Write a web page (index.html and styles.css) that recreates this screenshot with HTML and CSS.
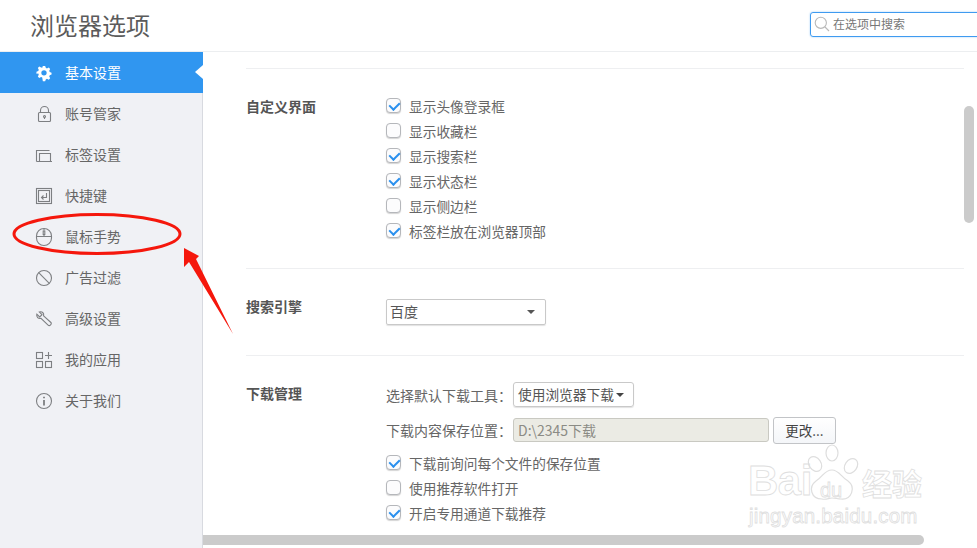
FILE: index.html
```html
<!DOCTYPE html>
<html lang="zh">
<head>
<meta charset="utf-8">
<title>浏览器选项</title>
<link rel="stylesheet" href="styles.css">
</head>
<body>
<div class="app">
  <header class="top">
    <h1 class="title">浏览器选项</h1>
    <div class="search">
      <svg class="search-icon" width="16" height="16" viewBox="0 0 16 16"><circle cx="6.800" cy="6.800" r="5.600"/><path d="M11 11l4 4"/></svg>
      <span>在选项中搜索</span>
    </div>
  </header>
  <div class="body">
    <nav class="side">
      <a class="item active">
        <svg class="ico" viewBox="0 0 18 18"><path class="solid" fill-rule="evenodd" d="M7.700 1h2.600l.7 2.200 1.300.6 2.100-1 1.500 1.600-1 2 .5 1.400 2.100.8v2.200l-2.100.8-.5 1.400 1 2-1.500 1.600-2.100-1-1.300.6-.7 2.200H7.700L7 14.200l-1.300-.6-2.100 1-1.500-1.600 1-2-.5-1.400L.5 9.800V7.600l2.100-.8.5-1.400-1-2 1.500-1.600 2.100 1L7 3.200zM9 5.800a3 3 0 1 0 0 6 3 3 0 0 0 0-6z"/></svg>
        <span>基本设置</span>
      </a>
      <a class="item">
        <svg class="ico" viewBox="0 0 16 16"><rect x="2.500" y="6.500" width="12" height="9" rx="1"/><path d="M4.500 6.500V4.500a4 4 0 0 1 8 0v2"/><circle cx="8.500" cy="10.500" r="1"/><path d="M8.500 11.500v1.500"/></svg>
        <span>账号管家</span>
      </a>
      <a class="item">
        <svg class="ico" viewBox="0 0 16 16"><path d="M.5 14.500V3.500H13.500M3.500 14.500V6.500H14.500V14.500M.5 14.500H16"/></svg>
        <span>标签设置</span>
      </a>
      <a class="item">
        <svg class="ico" viewBox="0 0 16 16"><rect x=".5" y=".5" width="15" height="15"/><rect x="2.500" y="2.500" width="11" height="11"/><path d="M10.500 5v4.500H5.500M7.500 7.500l-2 2 2 2"/></svg>
        <span>快捷键</span>
      </a>
      <a class="item">
        <svg class="ico" viewBox="0 0 16 16"><rect x=".5" y="-.5" width="15" height="17" rx="7.500"/><path d="M.5 7.500h15M8 -.5v2M8 5.500v2"/><rect x="7.200" y="2" width="1.600" height="3.500"/></svg>
        <span>鼠标手势</span>
      </a>
      <a class="item">
        <svg class="ico" viewBox="0 0 16 16"><circle cx="8" cy="8" r="7.500"/><path d="M2.700 2.700l10.600 10.600"/></svg>
        <span>广告过滤</span>
      </a>
      <a class="item">
        <svg class="ico" viewBox="0 0 16 16"><path d="M.8 3.200l2.900 2.700 2.300-2.200L3.300 1c2.700-.9 5 .9 4.300 3.800l7.300 6.700c1.400 1.400-1.300 4.100-2.800 2.700L5 7.400C2.200 8 .2 6 .8 3.200z"/></svg>
        <span>高级设置</span>
      </a>
      <a class="item">
        <svg class="ico" viewBox="0 0 16 16"><rect x=".5" y=".5" width="6" height="6"/><rect x=".5" y="9.500" width="6" height="6"/><rect x="9.500" y="9.500" width="6" height="6"/><path d="M12.500 0v7M9 3.500h7"/></svg>
        <span>我的应用</span>
      </a>
      <a class="item">
        <svg class="ico" viewBox="0 0 16 16"><circle cx="8" cy="8" r="7.500"/><path class="thick" d="M8 7v5.500M8 3.800v1.500"/></svg>
        <span>关于我们</span>
      </a>
    </nav>
    <main class="main">
      <section class="sec sec-ui">
        <h2 class="sec-name">自定义界面</h2>
        <div class="sec-body">
          <label class="check"><i class="box on"></i><span>显示头像登录框</span></label>
          <label class="check"><i class="box"></i><span>显示收藏栏</span></label>
          <label class="check"><i class="box on"></i><span>显示搜索栏</span></label>
          <label class="check"><i class="box on"></i><span>显示状态栏</span></label>
          <label class="check"><i class="box"></i><span>显示侧边栏</span></label>
          <label class="check"><i class="box on"></i><span>标签栏放在浏览器顶部</span></label>
        </div>
      </section>
      <section class="sec sec-engine">
        <h2 class="sec-name">搜索引擎</h2>
        <div class="sec-body">
          <div class="engine"><span>百度</span><i class="caret"></i></div>
        </div>
      </section>
      <section class="sec sec-dl">
        <h2 class="sec-name">下载管理</h2>
        <div class="sec-body">
          <div class="dl-row dl-tool">
            <span class="dl-label">选择默认下载工具：</span>
            <div class="tool"><span>使用浏览器下载</span><i class="caret dark"></i></div>
          </div>
          <div class="dl-row dl-path">
            <span class="dl-label">下载内容保存位置：</span>
            <div class="path">D:\2345下载</div>
            <div class="btn">更改...</div>
          </div>
          <label class="check"><i class="box on"></i><span>下载前询问每个文件的保存位置</span></label>
          <label class="check"><i class="box"></i><span>使用推荐软件打开</span></label>
          <label class="check"><i class="box on"></i><span>开启专用通道下载推荐</span></label>
        </div>
      </section>
    </main>
  </div>
  <div class="vbar"></div>
  <div class="hbar"></div>

  <div class="mark">
    <svg class="paw" width="56" height="58" viewBox="0 0 56 58"><ellipse cx="27" cy="9" rx="6" ry="8"/><ellipse cx="10" cy="20" rx="6" ry="8" transform="rotate(-35 10 20)"/><ellipse cx="46" cy="22" rx="6" ry="8" transform="rotate(35 46 22)"/><path d="M27 26c7 0 9 7 16 11 8 6 4 19-7 18-3 0-6-1-9-1s-6 2-10 1C6 55 3 43 11 37c7-4 8-11 16-11z"/></svg>
    <span class="mark-bai">Bai</span>
    <span class="mark-du">du</span>
    <span class="mark-cn">经验</span>
    <span class="mark-url">jingyan.baidu.com</span>
  </div>

  <svg class="ann" width="240" height="340" viewBox="0 0 240 340">
    <ellipse class="ring" cx="97" cy="234" rx="83" ry="19.500"/>
    <path class="arrow" d="M184 248l15 8-3 3 37 75-44-72-5 5z"/>
  </svg>
</div>
</body>
</html>
```
FILE: styles.css
```css
* { box-sizing: border-box; }
html, body { margin: 0; height: 100%; overflow: hidden; background: #fff; }
body { font-family: "Noto Sans CJK SC", "Liberation Sans", sans-serif; font-size: 14px; color: #555; }
.app { position: relative; width: 977px; height: 548px; display: flex; flex-direction: column; overflow: hidden; }

.top { height: 52px; flex: none; display: flex; align-items: center; justify-content: space-between; padding: 0 0 0 30px; border-bottom: 1px solid #eceef0; background: #fff; }
.title { margin: 0 0 2px; font-size: 24px; font-weight: 400; line-height: 32px; color: #5b5b5b; }
.search { width: 180px; height: 25px; margin: 0 -13px 3px 0; display: flex; align-items: center; gap: 3px; padding-left: 3px; border: 1px solid #3f9bf0; border-radius: 3px; box-shadow: 0 0 2px #9ccbf5; color: #777; font-size: 12px; }
.search span { margin-top: -2px; }
.search-icon { fill: none; stroke: #b9b9b9; stroke-width: 1.100; flex: none; }

.body { flex: 1; display: flex; min-height: 0; }
.side { width: 203px; flex: none; background: #f0f1f5; border-right: 1px solid #d8dae0; }
.item { position: relative; height: 41px; display: flex; align-items: center; gap: 13px; padding-left: 36px; color: #666; font-size: 14px; }
.item span { margin-top: -2px; }
.item.active { background: #3096f0; color: #fff; margin-right: -1px; }
.item.active::after { content: ""; position: absolute; right: 0; top: 13px; border: 7px solid transparent; border-left: 0; border-right: 8px solid #fff; }
.ico { width: 16px; height: 16px; flex: none; fill: none; stroke: #7d7f82; stroke-width: 1.100; overflow: visible; }
.ico .solid { fill: #fff; stroke: none; }
.ico .thick { stroke-width: 1.800; }

.main { flex: 1; min-width: 0; padding: 16px 13px 0 43px; overflow: hidden; }
.sec { display: flex; border-top: 1px solid #eeeff1; }
.sec-name { margin: 0; width: 140px; flex: none; font-size: 14px; line-height: 20px; font-weight: 700; color: #555; }
.sec-body { flex: 1; min-width: 0; }
.sec-ui { height: 200px; padding-top: 24px; }
.sec-ui .sec-name { margin-top: 3px; }
.sec-engine { height: 87px; padding-top: 27px; }
.sec-dl { padding-top: 27px; }

.check { display: flex; align-items: center; height: 25px; gap: 8px; font-size: 13.700px; color: #666; }
.box { width: 15px; height: 15px; flex: none; border: 1px solid #b5b7bb; border-radius: 4px; background: #fcfcfd; box-shadow: 0 1px 1px #d5d5d5; position: relative; }
.box.on::after { content: ""; position: absolute; left: 4px; top: 1px; width: 5px; height: 8px; border: solid #2b90ee; border-width: 0 2px 2px 0; transform: rotate(45deg); }

.engine { width: 160px; height: 26px; margin-top: 3px; display: flex; align-items: center; justify-content: space-between; padding: 0 10px 0 3px; border: 1px solid #c9c9c9; border-radius: 2px; box-shadow: 0 1px 1px #e2e2e2; font-size: 14px; color: #555; }
.engine span { margin-top: -2px; }
.caret { width: 0; height: 0; border: 4px solid transparent; border-top: 4px solid #555; border-bottom: 0; }
.caret.dark { border-top-color: #444; margin-left: 2px; }

.dl-row { display: flex; align-items: center; }
.dl-tool { height: 25px; margin-top: -1px; }
.dl-path { height: 26px; margin-top: 10px; margin-bottom: 7px; }
.dl-label { width: 127px; flex: none; font-size: 14px; color: #666; white-space: nowrap; }
.tool { width: 121px; height: 25px; display: flex; align-items: center; padding-left: 4px; border: 1px solid #c9c9c9; border-radius: 3px; box-shadow: 0 1px 1px #e2e2e2; font-size: 13.700px; color: #555; white-space: nowrap; }
.tool span { margin-top: -2px; }
.path { width: 256px; height: 24px; margin-right: 4px; padding-left: 4px; line-height: 22px; background: #ebebe4; border: 1px solid #c9c9c2; border-radius: 3px; font-size: 14px; color: #8b8b85; }
.btn { width: 63px; height: 27px; line-height: 24px; text-align: center; border: 1px solid #c2c4c7; border-radius: 3px; background: linear-gradient(#fff, #f4f6f9); font-size: 13.500px; color: #444; }

.vbar { position: absolute; left: 964px; top: 106px; width: 10px; height: 117px; border-radius: 5px; background: #cbcbcb; }
.hbar { position: absolute; left: 203px; top: 535px; width: 721px; height: 10px; border-radius: 0 5px 5px 0; background: #cbcbcb; }

.ann { position: absolute; left: 0; top: 0; pointer-events: none; }
.ring { fill: none; stroke: #f5170c; stroke-width: 3; }
.arrow { fill: #f5170c; }

.mark { position: absolute; left: 748px; top: 440px; width: 210px; height: 95px; color: transparent; -webkit-text-stroke: .8px #dedede; pointer-events: none; }
.mark span { position: absolute; white-space: nowrap; font-family: "Liberation Sans", "Noto Sans CJK SC", sans-serif; }
.paw { position: absolute; left: 57px; top: 4px; fill: none; stroke: #dedede; stroke-width: 1.200; }
.mark-bai { left: 0; top: 18px; font-size: 42px; line-height: 46px; font-weight: 700; letter-spacing: -.5px; }
.mark-du { left: 72px; top: 38px; font-size: 20px; line-height: 24px; }
.mark-cn { left: 114px; top: 27px; font-size: 30px; line-height: 36px; font-weight: 700; }
.mark-url { left: 1px; top: 63px; font-size: 20.500px; line-height: 26px; letter-spacing: .2px; }
```
